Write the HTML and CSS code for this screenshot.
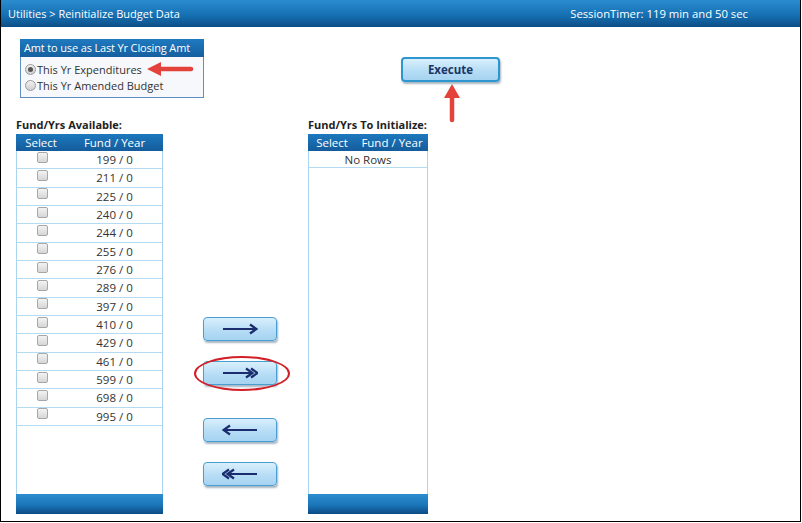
FILE: index.html
```html
<!DOCTYPE html>
<html>
<head>
<meta charset="utf-8">
<link rel="stylesheet" href="styles.css">
</head>
<body>
<div class="frame">
  <div class="header">
    <span class="crumb">Utilities &gt; Reinitialize Budget Data</span>
    <span class="timer">SessionTimer: 119 min and 50 sec</span>
  </div>
  <div class="content">
    <div class="top-row">
      <div class="amt-panel">
        <div class="amt-head">Amt to use as Last Yr Closing Amt</div>
        <div class="amt-body">
          <label class="radio-line"><span class="radio checked"></span>This Yr Expenditures</label>
          <label class="radio-line"><span class="radio"></span>This Yr Amended Budget</label>
        </div>
        <svg class="anno-left" width="48" height="18" viewBox="0 0 48 18">
          <path d="M12 9 H45" stroke="#e3433b" stroke-width="4.5" stroke-linecap="round"/>
          <path d="M1 9 L15 2 L15 16 Z" fill="#e3433b"/>
        </svg>
      </div>
      <div class="exec-wrap">
        <button class="btn exec">Execute</button>
        <svg class="anno-up" width="20" height="40" viewBox="0 0 20 40">
          <path d="M10 12 V37" stroke="#e3433b" stroke-width="4.5" stroke-linecap="round"/>
          <path d="M10 1 L18 15 L2 15 Z" fill="#e3433b"/>
        </svg>
      </div>
    </div>

    <div class="lists">
      <div class="list-col left-col">
        <div class="list-label">Fund/Yrs Available:</div>
        <div class="grid">
          <div class="grid-head">
            <span class="c-sel">Select</span><span class="c-fund">Fund / Year</span>
          </div>
          <div class="grid-body">
            <div class="row"><span class="c-sel"><span class="cb"></span></span><span class="c-fund">199 / 0</span></div>
            <div class="row"><span class="c-sel"><span class="cb"></span></span><span class="c-fund">211 / 0</span></div>
            <div class="row"><span class="c-sel"><span class="cb"></span></span><span class="c-fund">225 / 0</span></div>
            <div class="row"><span class="c-sel"><span class="cb"></span></span><span class="c-fund">240 / 0</span></div>
            <div class="row"><span class="c-sel"><span class="cb"></span></span><span class="c-fund">244 / 0</span></div>
            <div class="row"><span class="c-sel"><span class="cb"></span></span><span class="c-fund">255 / 0</span></div>
            <div class="row"><span class="c-sel"><span class="cb"></span></span><span class="c-fund">276 / 0</span></div>
            <div class="row"><span class="c-sel"><span class="cb"></span></span><span class="c-fund">289 / 0</span></div>
            <div class="row"><span class="c-sel"><span class="cb"></span></span><span class="c-fund">397 / 0</span></div>
            <div class="row"><span class="c-sel"><span class="cb"></span></span><span class="c-fund">410 / 0</span></div>
            <div class="row"><span class="c-sel"><span class="cb"></span></span><span class="c-fund">429 / 0</span></div>
            <div class="row"><span class="c-sel"><span class="cb"></span></span><span class="c-fund">461 / 0</span></div>
            <div class="row"><span class="c-sel"><span class="cb"></span></span><span class="c-fund">599 / 0</span></div>
            <div class="row"><span class="c-sel"><span class="cb"></span></span><span class="c-fund">698 / 0</span></div>
            <div class="row"><span class="c-sel"><span class="cb"></span></span><span class="c-fund">995 / 0</span></div>
          </div>
          <div class="grid-foot"></div>
        </div>
      </div>

      <div class="move-col">
        <button class="btn move first">
          <svg width="36" height="12" viewBox="0 0 36 12"><path d="M1 6 H34 M28 1.5 L34.5 6 L28 10.5" fill="none" stroke="#1b2d6e" stroke-width="2.2"/></svg>
        </button>
        <div class="hl">
          <button class="btn move">
            <svg width="36" height="12" viewBox="0 0 36 12"><path d="M1 6 H30 M24 1.5 L30.5 6 L24 10.5 M29 1.5 L35.5 6 L29 10.5" fill="none" stroke="#1b2d6e" stroke-width="2.2"/></svg>
          </button>
        </div>
        <button class="btn move third">
          <svg width="36" height="12" viewBox="0 0 36 12"><path d="M35 6 H2 M8 1.5 L1.5 6 L8 10.5" fill="none" stroke="#1b2d6e" stroke-width="2.2"/></svg>
        </button>
        <button class="btn move fourth">
          <svg width="36" height="12" viewBox="0 0 36 12"><path d="M35 6 H6 M12 1.5 L5.5 6 L12 10.5 M7 1.5 L0.5 6 L7 10.5" fill="none" stroke="#1b2d6e" stroke-width="2.2"/></svg>
        </button>
      </div>

      <div class="list-col right-col">
        <div class="list-label">Fund/Yrs To Initialize:</div>
        <div class="grid">
          <div class="grid-head">
            <span class="c-sel">Select</span><span class="c-fund">Fund / Year</span>
          </div>
          <div class="grid-body">
            <div class="row norows">No Rows</div>
          </div>
          <div class="grid-foot"></div>
        </div>
      </div>
    </div>
  </div>
</div>
</body>
</html>
```

FILE: styles.css
```css
* { box-sizing: border-box; }
html, body { margin: 0; padding: 0; background: #fff; }
body { font-family: "Open Sans", "Liberation Sans", sans-serif; color: #333; }

.frame {
  width: 801px;
  height: 522px;
  border: 1px solid #000;
  border-top: none;
  overflow: hidden;
}

.header {
  height: 27px;
  background: linear-gradient(#2a8ccf, #1671b3 55%, #0d4f88);
  color: #fff;
  display: flex;
  align-items: center;
  justify-content: space-between;
  padding: 0 52px 0 7px;
}
.crumb { font-size: 11px; }
.timer { font-size: 11.3px; }

.content { padding: 0 0 0 15px; }

.top-row {
  display: flex;
  align-items: flex-start;
  padding: 12px 0 0 4px;
  height: 91px;
}

.amt-panel { position: relative; width: 184px; }
.amt-head {
  height: 18px;
  background: linear-gradient(#1f7ac0, #155f9f);
  color: #fff;
  font-size: 11px;
  letter-spacing: -0.15px;
  line-height: 18px;
  padding-left: 4px;
  white-space: nowrap;
}
.amt-body {
  height: 41px;
  border: 1px solid #5d8fbf;
  border-top: none;
  background: #f6f8fb;
  padding: 4px 0 0 4px;
  font-size: 11px;
  color: #333;
}
.radio-line { display: flex; align-items: center; height: 16px; }
.radio {
  width: 11px; height: 11px;
  border-radius: 50%;
  border: 1px solid #9a9a9a;
  background: linear-gradient(#f2f2f2, #cfcfcf);
  margin-right: 1px;
  position: relative;
}
.radio.checked::after {
  content: "";
  position: absolute;
  left: 2px; top: 2px;
  width: 5px; height: 5px;
  border-radius: 50%;
  background: #555;
}

.anno-left { position: absolute; left: 126px; top: 21px; }

.exec-wrap { position: relative; margin: 18px 0 0 197px; }
.btn {
  font-family: "Open Sans", "Liberation Sans", sans-serif;
  background: linear-gradient(#d9effc, #b4dcf5 60%, #a6d3f1);
  border: 1px solid #4a9fd2;
  border-radius: 4px;
  box-shadow: 1px 2px 2px rgba(60, 90, 120, 0.45);
  padding: 0;
  display: flex;
  align-items: center;
  justify-content: center;
  cursor: pointer;
}
.exec {
  width: 99px; height: 25px;
  border: 2px solid #2d96cf;
  font-weight: bold;
  font-size: 11.5px;
  color: #1d3566;
}
.anno-up { position: absolute; left: 41px; top: 26px; }

.lists {
  display: flex;
  align-items: flex-start;
}
.list-col { display: flex; flex-direction: column; }
.left-col { width: 147px; }
.right-col { width: 120px; margin-left: 31px; }

.list-label {
  font-size: 11px;
  font-weight: bold;
  color: #222;
  height: 16px;
  line-height: 14px;
  white-space: nowrap;
}

.grid {
  height: 380px;
  border: 1px solid #a9d5f0;
  border-bottom: none;
  display: flex;
  flex-direction: column;
}
.grid-head {
  height: 17px;
  background: linear-gradient(#1d78bd, #145c9c);
  color: #fff;
  font-size: 11.5px;
  display: flex;
  align-items: center;
  margin: -1px -1px 0 -1px;
}
.left-col .c-sel { width: 50px; text-align: center; }
.left-col .c-fund { flex: 1; text-align: center; }
.right-col .grid-head .c-sel { width: 48px; text-align: center; }
.right-col .grid-head .c-fund { flex: 1; text-align: center; }

.grid-body { flex: 1; }
.row {
  height: 18.33px;
  border-bottom: 1px solid #b5dbf2;
  display: flex;
  align-items: center;
  font-size: 11.5px;
  color: #333;
}
.row .c-sel { display: flex; justify-content: center; }
.cb {
  width: 11px; height: 11px;
  border: 1px solid #a7a7a7;
  border-radius: 2px;
  background: linear-gradient(#f3f3f3, #d6d6d6);
  margin-top: -5px;
}
.norows { justify-content: center; height: 17px; }

.grid-foot {
  height: 20px;
  background: linear-gradient(#2c8dce, #1b76b9 55%, #0b4b84);
  margin: 0 -1px;
}

.move-col {
  display: flex;
  flex-direction: column;
  align-items: flex-start;
  margin-left: 40px;
  padding-top: 199px;
}
.move { width: 74px; height: 24px; }
.hl { position: relative; margin-top: 20px; }
.hl::after {
  content: "";
  position: absolute;
  left: -9px; right: -13px; top: -5px; bottom: -6px;
  border: 2px solid #d21f27;
  border-radius: 50%;
}
.third { margin-top: 33px; }
.fourth { margin-top: 20px; }
```
